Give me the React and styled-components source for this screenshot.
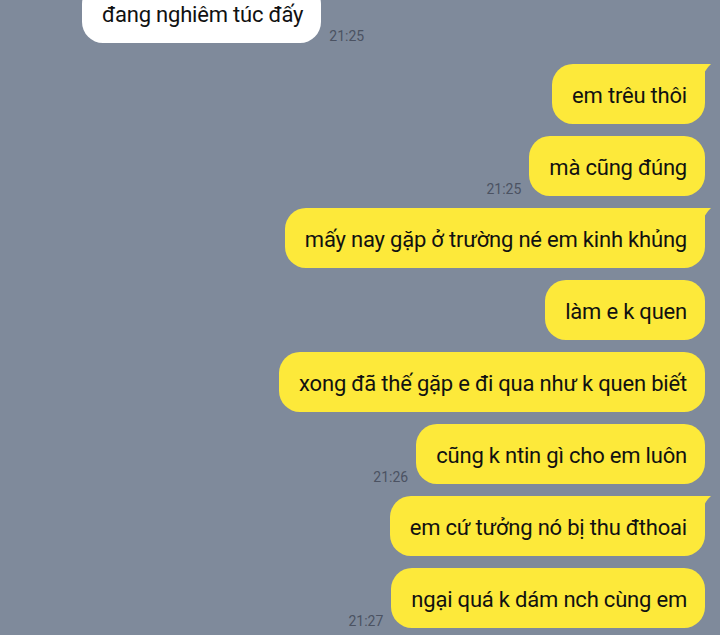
import React from 'react'
import styled, { createGlobalStyle } from 'styled-components'

const GlobalStyle = createGlobalStyle`
  html, body {
    margin: 0;
    padding: 0;
    background-color: #7f8a9b;
    overflow: hidden;
  }
  body {
    font-family: Roboto, "Noto Sans", "Liberation Sans", sans-serif;
  }
`

const ChatWrapper = styled.div`
  width: 720px;
  height: 635px;
  overflow: hidden;
  background-color: #7f8a9b;
`

const MessageList = styled.div`
  display: flex;
  flex-direction: column;
  gap: 12px;
  margin-top: -17px;
  padding: 0 15px 0 82px;
`

const Row = styled.div`
  display: flex;
  align-items: flex-end;
  gap: 8px;
  justify-content: ${(props) => (props.mine ? 'flex-end' : 'flex-start')};
  margin-bottom: ${(props) => (props.extra ? '9px' : '0')};
`

const Bubble = styled.div`
  position: relative;
  box-sizing: border-box;
  height: 60px;
  display: flex;
  align-items: center;
  padding: 2px 18px 0 20px;
  border-radius: 21px;
  border-top-right-radius: ${(props) => (props.tail ? '8px' : '21px')};
  background-color: ${(props) => (props.mine ? '#fde93a' : '#ffffff')};
  color: #111111;
  font-size: 22px;
  letter-spacing: -0.2px;
  white-space: nowrap;

  &::after {
    content: '';
    display: ${(props) => (props.tail ? 'block' : 'none')};
    position: absolute;
    top: 0;
    right: -6px;
    width: 18px;
    height: 18px;
    background-color: #fde93a;
    clip-path: path('M0 0 H18 Q11 6 8 18 H0 Z');
  }
`

const Time = styled.span`
  font-size: 14px;
  color: #4b5262;
  margin-bottom: -1px;
  line-height: 16px;
`

const messages = [
  { text: 'đang nghiêm túc đấy', mine: false, time: '21:25', extra: true },
  { text: 'em trêu thôi', mine: true, tail: true },
  { text: 'mà cũng đúng', mine: true, time: '21:25' },
  { text: 'mấy nay gặp ở trường né em kinh khủng', mine: true, tail: true },
  { text: 'làm e k quen', mine: true },
  { text: 'xong đã thế gặp e đi qua như k quen biết', mine: true },
  { text: 'cũng k ntin gì cho em luôn', mine: true, time: '21:26' },
  { text: 'em cứ tưởng nó bị thu đthoai', mine: true, tail: true },
  { text: 'ngại quá k dám nch cùng em', mine: true, time: '21:27' },
]

export default function App() {
  return (
    <ChatWrapper>
      <GlobalStyle />
      <MessageList>
        {messages.map((m, i) => (
          <Row key={i} mine={m.mine} extra={m.extra}>
            {m.mine && m.time && <Time>{m.time}</Time>}
            <Bubble mine={m.mine} tail={m.tail}>
              {m.text}
            </Bubble>
            {!m.mine && m.time && <Time>{m.time}</Time>}
          </Row>
        ))}
      </MessageList>
    </ChatWrapper>
  )
}
